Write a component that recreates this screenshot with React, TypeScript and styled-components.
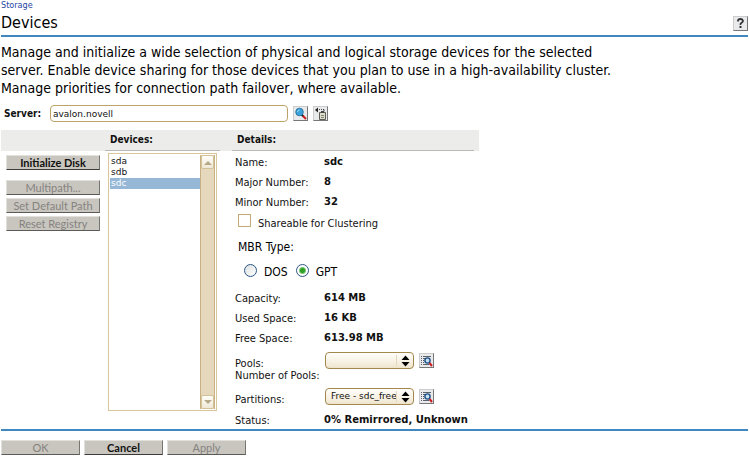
import React, { useState } from "react";
import styled, { createGlobalStyle } from "styled-components";

const narrow = '"DejaVu Sans Condensed", "DejaVu Sans", sans-serif';
const wide = '"DejaVu Sans", sans-serif';
const humanist = 'Lato, "Open Sans", sans-serif';

const GlobalStyle = createGlobalStyle`
  * { box-sizing: border-box; }
  body { margin: 0; background: #fff; color: #111; font: 11px/14px ${narrow}; }
  button, input, select { margin: 0; padding: 0; font: inherit; color: inherit; }
`;

const Page = styled.main`
  padding: 0 1px 1px;
`;

const Crumb = styled.a`
  display: block;
  font: 9px/10px ${narrow};
  height: 11px;
  color: #2648a4;
  text-decoration: none;
`;

const TitleBar = styled.header`
  display: flex;
  justify-content: space-between;
  align-items: center;
  height: 26px;
  border-bottom: 2px solid #4088bf;
`;

const Title = styled.h1`
  margin: 0;
  font: 16px/24px ${narrow};
  color: #000;
`;

const IconButton = styled.button`
  display: flex;
  flex: none;
  width: 15px;
  height: 15px;
  border: 1px solid #777;
  border-top-color: #ccc;
  border-left-color: #ccc;
  background: #e9eaeb;
`;

const Intro = styled.p`
  margin: 6px 0 8px;
  max-width: 620px;
  font: 14px/18px ${narrow};
  color: #000;
`;

const ServerRow = styled.div`
  display: flex;
  align-items: center;
  gap: 5px;
  padding-left: 3px;
`;

const ServerLabel = styled.label`
  width: 41px;
  font: bold 10px/14px ${narrow};
`;

const ServerInput = styled.input`
  flex: 0 1 238px;
  min-width: 80px;
  height: 17px;
  border: 1px solid #bda36a;
  border-radius: 4px;
  padding: 0 2px;
  background: #fff;
  font: 9px/14px ${wide};
`;

const Columns = styled.div`
  display: grid;
  grid-template-columns: 104px 120px 254px;
  margin-top: 8px;
`;

const HeadCell = styled.h2<{ $indent?: number }>`
  display: flex;
  height: 21px;
  margin: 0;
  padding-left: ${(p) => p.$indent ?? 0}px;
  padding-right: 5px;
  background: #ececea;
  font: bold 10px/20px ${narrow};

  span {
    flex: 1;
    padding-left: 5px;
    border-bottom: 1px solid #b9b9b7;
  }
`;

const Actions = styled.div`
  display: flex;
  flex-direction: column;
  gap: 3px;
  padding: 4px 5px 0;
`;

const PushButton = styled.button<{ $spaced?: boolean }>`
  height: 15px;
  margin-bottom: ${(p) => (p.$spaced ? 7 : 0)}px;
  border: 1px solid #e2e0da;
  border-right-color: #77756f;
  border-bottom-color: #3c3b39;
  background: #c9c6bf;
  font: bold 11px/13px ${humanist};
  color: #111;
  white-space: nowrap;

  &:disabled {
    font-weight: normal;
    color: #85837f;
    border-bottom-color: #5d5b57;
  }
`;

const ListFrame = styled.div`
  display: flex;
  width: 109px;
  height: 258px;
  margin: 2px 0 0 3px;
  padding: 1px;
  border: 1px solid #d9c79b;
`;

const DeviceList = styled.select`
  flex: 1;
  min-width: 0;
  height: 100%;
  border: 0;
  border-radius: 0;
  padding: 1px 0 0;
  outline: none;
  appearance: none;
  overflow: hidden;
  background: #fff;
  font: 9px/11px ${wide};

  option {
    min-height: 11px;
    height: 11px;
    padding: 0 1px;
    line-height: 11px;
  }
  option:checked {
    color: #fff;
    background: #96b7d6 linear-gradient(#96b7d6, #96b7d6);
  }
`;

const ScrollTrack = styled.div`
  display: flex;
  flex-direction: column;
  justify-content: space-between;
  width: 15px;
  border: solid #c8b080;
  border-width: 0 1px;
  background: #e6d8bc;
`;

const ScrollButton = styled.button`
  display: flex;
  align-items: center;
  justify-content: center;
  height: 14px;
  border: 1px solid #d3c197;
  border-radius: 2px;
  background: linear-gradient(#fffefa, #efe8d6);
`;

const Details = styled.div`
  display: flex;
  flex-direction: column;
  padding: 1px 5px 0 10px;
`;

const Row = styled.div<{ $h?: number; $gap?: number }>`
  display: flex;
  align-items: center;
  height: ${(p) => p.$h ?? 20}px;
  margin-top: ${(p) => p.$gap ?? 0}px;
`;

const Label = styled.label<{ $low?: boolean }>`
  width: 89px;
  padding-top: ${(p) => (p.$low ? 8 : 2)}px;
  white-space: nowrap;
`;

const Value = styled.strong`
  font: bold 10px/14px ${wide};
  white-space: nowrap;
`;

const Check = styled.input`
  appearance: none;
  width: 13px;
  height: 13px;
  margin: 0 7px 6px 3px;
  border: 1px solid #c3aa72;
  background: #fff;

  &:checked { background: #b9a26d; box-shadow: inset 0 0 0 2px #fff; }
`;

const Mbr = styled.fieldset`
  margin: 6px 0 0 3px;
  padding: 0;
  border: 0;
  font: 12px/17px ${narrow};
  color: #000;
`;

const MbrLegend = styled.legend`
  padding: 0;
`;

const MbrChoices = styled.div`
  display: flex;
  align-items: center;
  gap: 8px;
  padding: 7px 0 0 6px;

  label {
    display: flex;
    align-items: center;
    gap: 7px;
    line-height: 18px;
  }
`;

const Radio = styled.input`
  appearance: none;
  width: 13px;
  height: 13px;
  margin-bottom: 3px;
  border: 1px solid #2c5686;
  border-radius: 50%;
  background: linear-gradient(135deg, #dcdfe0, #fff);

  &:checked {
    background: radial-gradient(circle, #2f9f28 0 2px, #79c870 3px, #fff 4px);
  }
`;

const SelectBox = styled.div`
  display: grid;
  width: 89px;
  height: 17px;
  margin: 0 5px 0 1px;
  color: #111;

  > * { grid-area: 1 / 1; }
  > svg { justify-self: end; pointer-events: none; }
`;

const Dropdown = styled.select`
  width: 100%;
  height: 17px;
  appearance: none;
  border: 1px solid #a3884e;
  border-radius: 4px;
  padding: 0 17px 0 5px;
  background: linear-gradient(#fffefb, #f7f1e3 60%, #eee4cd);
  font: 9px/14px ${wide};
`;

const Rule = styled.hr`
  height: 2px;
  margin: 0;
  border: 0;
  background: #4088bf;
`;

const Footer = styled.footer`
  display: flex;
  gap: 4px;
  padding-top: 9px;

  button { width: 79px; }
`;

const HelpIcon = () => (
  <svg width="13" height="13" viewBox="0 0 13 13" aria-hidden="true">
    <path d="M4 4.5V3.2Q4.4 2 6.4 2T9 3.8Q9 5 7.6 5.8T6.5 8" fill="none" stroke="#333" strokeWidth="1.8" />
    <rect x="5.5" y="9" width="2" height="2" fill="#333" />
  </svg>
);

const SearchIcon = () => (
  <svg width="13" height="13" viewBox="0 0 13 13" aria-hidden="true">
    <path d="M7.5 7.5l2 2" stroke="#222" strokeWidth="2" />
    <path d="M9 9l3 3" stroke="#c91d20" strokeWidth="2" />
    <circle cx="5.5" cy="5" r="3.8" fill="#3aa3dc" stroke="#1c6696" strokeWidth=".8" />
    <path d="M3.5 5q.2-2 2-2" fill="none" stroke="#9bdcf8" />
  </svg>
);

const HistoryIcon = () => (
  <svg width="13" height="13" viewBox="0 0 13 13" aria-hidden="true">
    <path d="M1 3l3-2.400v4.800z" fill="#222" />
    <path d="M5 2.500h1M7 2.500h1M9 2.500h1v2" stroke="#444" fill="none" />
    <path d="M5.500 5.500h6v7h-6z" fill="#dcdccb" stroke="#5d5d55" />
    <path d="M7 5h3" stroke="#444" strokeWidth="2" />
    <path d="M7 8.500h3M7 10.500h3" stroke="#85857a" />
  </svg>
);

const InspectIcon = () => (
  <svg width="13" height="13" viewBox="0 0 13 13" aria-hidden="true">
    <path d="M1 2.500h1M1 4.500h1M1 6.500h1M1 8.500h1M1 10.500h1M3 2.500h8M3 4.500h2M3 6.500h1M3 8.500h1M3 10.500h6" stroke="#5c636c" />
    <circle cx="7.500" cy="6.500" r="2.600" fill="#c2e0f2" stroke="#1e4f86" strokeWidth="1.400" />
    <path d="M9.500 9l2.500 3" stroke="#c91d20" strokeWidth="2" />
  </svg>
);

const Spinner = () => (
  <svg width="18" height="17" viewBox="0 0 18 17" aria-hidden="true">
    <path d="M.5 3v11" stroke="#e3d8bd" />
    <path d="M9.500 3.500L13.500 8h-8zM9.500 14.500L13.500 10h-8z" fill="#000" />
  </svg>
);

const Triangle = ({ down }: { down?: boolean }) => (
  <svg width="8" height="5" viewBox="0 0 8 5" aria-hidden="true">
    <path d={down ? "M0 0h8L4 4z" : "M0 5h8L4 1z"} fill="#b5a98a" />
  </svg>
);

const Fact = ({ name, value, gap }: { name: string; value: string; gap?: number }) => (
  <Row $gap={gap}>
    <Label as="span">{name}:</Label>
    <Value>{value}</Value>
  </Row>
);

export default function App() {
  const [device, setDevice] = useState("sdc");
  return (
    <>
      <GlobalStyle />
      <Page>
        <Crumb href="#storage">Storage</Crumb>
        <TitleBar>
          <Title>Devices</Title>
          <IconButton aria-label="Help"><HelpIcon /></IconButton>
        </TitleBar>
        <Intro>
          Manage and initialize a wide selection of physical and logical storage devices for the selected server.
          Enable device sharing for those devices that you plan to use in a high-availability cluster. Manage
          priorities for connection path failover, where available.
        </Intro>
        <ServerRow>
          <ServerLabel htmlFor="server">Server:</ServerLabel>
          <ServerInput id="server" defaultValue="avalon.novell" />
          <IconButton aria-label="Search"><SearchIcon /></IconButton>
          <IconButton aria-label="History"><HistoryIcon /></IconButton>
        </ServerRow>

        <Columns>
          <HeadCell as="div" />
          <HeadCell id="devices-label"><span>Devices:</span></HeadCell>
          <HeadCell $indent={7}><span>Details:</span></HeadCell>

          <Actions>
            <PushButton $spaced>Initialize Disk</PushButton>
            <PushButton disabled>Multipath...</PushButton>
            <PushButton disabled>Set Default Path</PushButton>
            <PushButton disabled>Reset Registry</PushButton>
          </Actions>

          <ListFrame>
            <DeviceList
              size={3}
              aria-labelledby="devices-label"
              value={device}
              onChange={(e) => setDevice(e.target.value)}
            >
              <option>sda</option>
              <option>sdb</option>
              <option>sdc</option>
            </DeviceList>
            <ScrollTrack>
              <ScrollButton aria-label="Scroll up"><Triangle /></ScrollButton>
              <ScrollButton aria-label="Scroll down"><Triangle down /></ScrollButton>
            </ScrollTrack>
          </ListFrame>

          <Details>
            <Fact name="Name" value={device} />
            <Fact name="Major Number" value="8" />
            <Fact name="Minor Number" value="32" />
            <Row $gap={1}>
              <Check id="shareable" type="checkbox" />
              <Label htmlFor="shareable">Shareable for Clustering</Label>
            </Row>
            <Mbr>
              <MbrLegend>MBR Type:</MbrLegend>
              <MbrChoices>
                <label><Radio type="radio" name="mbr" />DOS</label>
                <label><Radio type="radio" name="mbr" defaultChecked />GPT</label>
              </MbrChoices>
            </Mbr>
            <Fact name="Capacity" value="614 MB" gap={7} />
            <Fact name="Used Space" value="16 KB" />
            <Fact name="Free Space" value="613.98 MB" />
            <Row $h={18} $gap={3}>
              <Label htmlFor="pools" $low>Pools:</Label>
              <SelectBox>
                <Dropdown id="pools"><option></option></Dropdown>
                <Spinner />
              </SelectBox>
              <IconButton aria-label="View pool"><InspectIcon /></IconButton>
            </Row>
            <Row $h={12}><Label as="span">Number of Pools:</Label></Row>
            <Row $h={18} $gap={6}>
              <Label htmlFor="partitions" $low>Partitions:</Label>
              <SelectBox>
                <Dropdown id="partitions"><option>Free - sdc_free</option></Dropdown>
                <Spinner />
              </SelectBox>
              <IconButton aria-label="View partition"><InspectIcon /></IconButton>
            </Row>
            <Row $h={18} $gap={6}>
              <Label as="span">Status:</Label>
              <Value>0% Remirrored, Unknown</Value>
            </Row>
          </Details>
        </Columns>

        <Rule />
        <Footer>
          <PushButton disabled>OK</PushButton>
          <PushButton>Cancel</PushButton>
          <PushButton disabled>Apply</PushButton>
        </Footer>
      </Page>
    </>
  );
}
